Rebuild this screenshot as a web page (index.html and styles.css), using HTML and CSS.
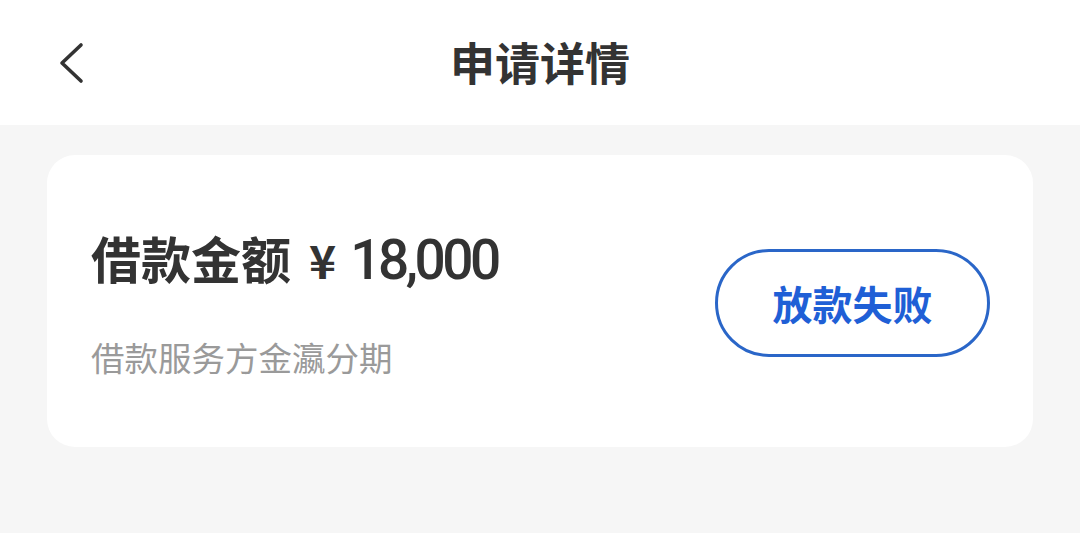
FILE: index.html
```html
<!DOCTYPE html>
<html lang="zh">
<head>
<meta charset="utf-8">
<link rel="stylesheet" href="styles.css">
</head>
<body>
<header class="nav">
  <span class="back">
    <svg width="28" height="42" viewBox="0 0 28 42"><path d="M24 3 L5 21 L24 39" fill="none" stroke="#333" stroke-width="3.6" stroke-linecap="round" stroke-linejoin="round"/></svg>
  </span>
  <h1 class="title">申请详情</h1>
</header>
<main class="content">
  <section class="card">
    <div class="info">
      <div class="amount"><span class="label">借款金额</span><span class="yen">¥</span><span class="num">18,000</span></div>
      <div class="provider">借款服务方金瀛分期</div>
    </div>
    <div class="status">放款失败</div>
  </section>
</main>
</body>
</html>
```
FILE: styles.css
```css
* { box-sizing: border-box; margin: 0; padding: 0; }
html, body { width: 1080px; height: 533px; overflow: hidden; }
body {
  background: #f6f6f6;
  font-family: "Noto Sans CJK SC", "Noto Sans", sans-serif;
  color: #333;
}
.nav {
  height: 125px;
  background: #fff;
  display: flex;
  align-items: center;
  justify-content: center;
  position: relative;
}
.back {
  position: absolute;
  left: 57px;
  top: 42px;
  display: flex;
}
.title {
  font-size: 45px;
  font-weight: 700;
  color: #333;
  line-height: 1;
  margin-top: -2px;
}
.content {
  padding: 30px 47px 0;
}
.card {
  background: #fff;
  border-radius: 28px;
  height: 292px;
  display: flex;
  align-items: center;
  justify-content: space-between;
  padding: 0 43px 0 44px;
}
.info {
  display: flex;
  flex-direction: column;
  margin-top: 4px;
}
.amount {
  font-size: 50px;
  font-weight: 700;
  line-height: 1;
  color: #333;
  display: flex;
  align-items: baseline;
}
.label { margin-right: 18px; }
.yen {
  font-family: "Noto Sans CJK SC", sans-serif;
  font-size: 46px;
  font-weight: 700;
  margin-right: 14px;
}
.num {
  font-family: "Roboto", "Noto Sans", sans-serif;
  font-weight: 500;
  font-size: 55px;
  letter-spacing: -3.5px;
}
.provider {
  margin-top: 52px;
  font-size: 33.5px;
  line-height: 1;
  color: #9a9a9a;
}
.status {
  width: 275px;
  height: 108px;
  border: 3px solid #2a66c8;
  border-radius: 54px;
  display: flex;
  align-items: center;
  justify-content: center;
  color: #1f5fd6;
  font-size: 40px;
  font-weight: 700;
  margin-top: 4px;
}
```
